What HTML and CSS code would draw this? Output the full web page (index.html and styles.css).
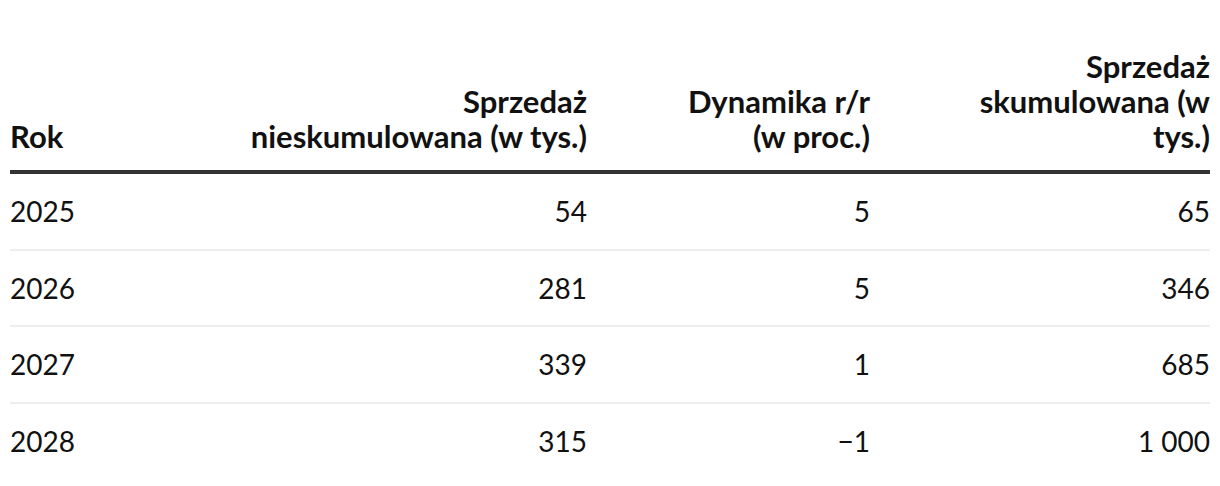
FILE: index.html
```html
<!DOCTYPE html>
<html lang="pl">
<head>
    <meta charset="UTF-8">
    <title>Sprzedaż</title>
    <link rel="stylesheet" href="styles.css">
</head>
<body>
    <table class="sales">
        <colgroup>
            <col class="c-year">
            <col class="c-flat">
            <col class="c-dyn">
            <col class="c-cum">
        </colgroup>
        <thead>
            <tr>
                <th class="left">Rok</th>
                <th>Sprzedaż nieskumulowana (w tys.)</th>
                <th class="dyn">Dynamika r/r (w proc.)</th>
                <th class="cum">Sprzedaż skumulowana (w tys.)</th>
            </tr>
        </thead>
        <tbody>
            <tr><td class="left">2025</td><td>54</td><td>5</td><td>65</td></tr>
            <tr><td class="left">2026</td><td>281</td><td>5</td><td>346</td></tr>
            <tr><td class="left">2027</td><td>339</td><td>1</td><td>685</td></tr>
            <tr><td class="left">2028</td><td>315</td><td>−1</td><td>1&#8239;000</td></tr>
        </tbody>
    </table>
</body>
</html>
```

FILE: styles.css
```css
body { margin: 0; padding: 0 10px; font-family: 'Lato', 'Liberation Sans', sans-serif; color: #111; background: #fff; }
.sales { width: 1200px; margin-top: 29px; border-collapse: collapse; table-layout: fixed; font-size: 28px; line-height: 35px; }
.c-year { width: 232px; }
.c-flat { width: 345px; }
.c-dyn { width: 283px; }
.c-cum { width: 340px; }
th, td { text-align: right; padding: 20px 0 19.5px; }
th { font-size: 31px; line-height: 35px; font-weight: 700; vertical-align: bottom; padding-bottom: 16px; border-bottom: 4px solid #333; }
td { border-bottom: 2px solid #eee; }
tbody tr:last-child td { border-bottom: none; }
th.left, td.left { text-align: left; }
th.dyn { padding-left: 88px; }
th.cum { padding-left: 90px; }
```
